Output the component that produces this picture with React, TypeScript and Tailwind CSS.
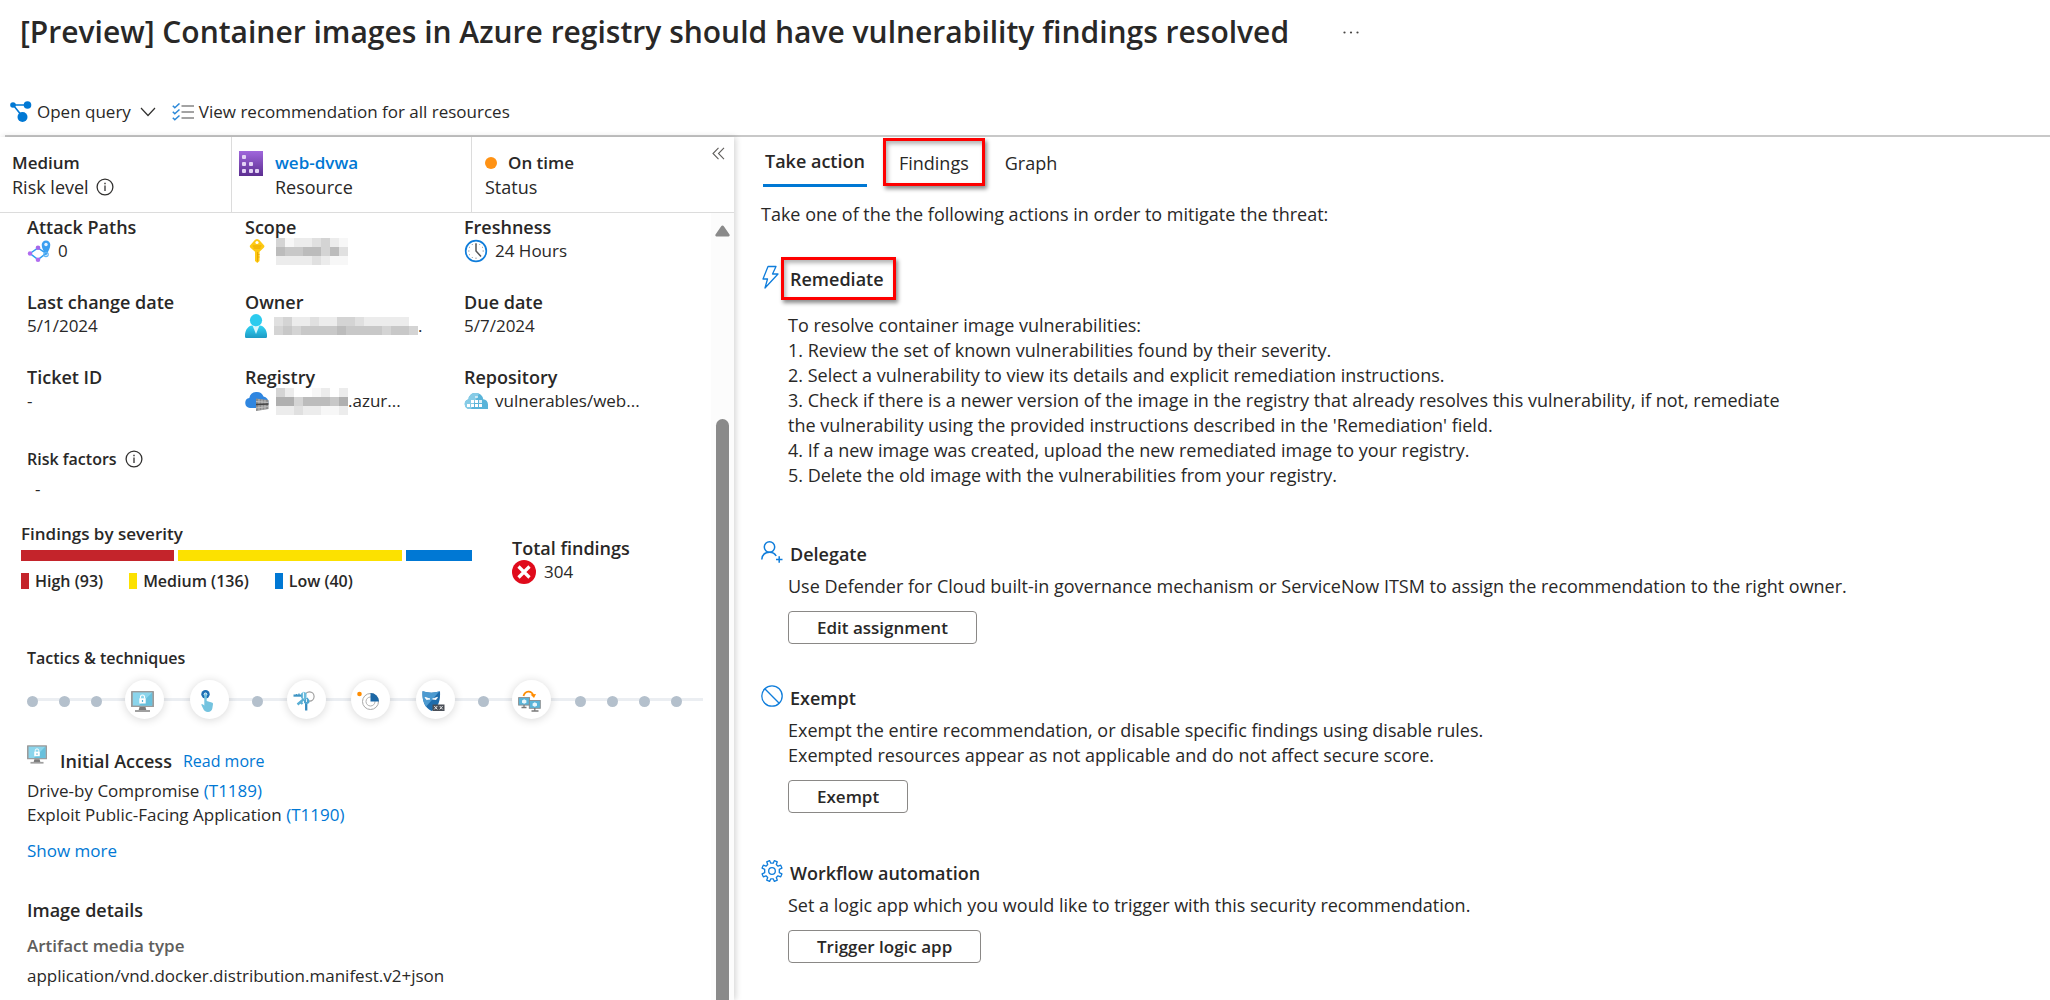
import type { ReactNode } from "react";

function QueryIcon() {
  return (
    <svg width="22" height="21" viewBox="0 0 22 21" fill="#0078d4">
      <path d="M3 4h15M4 5l8 10" stroke="#0078d4" strokeWidth="1.6" fill="none" />
      <circle cx="3" cy="4" r="2.8" />
      <circle cx="17.5" cy="4" r="3.8" />
      <circle cx="12.5" cy="16" r="5" />
    </svg>
  );
}

function ChevronIcon() {
  return (
    <svg width="16" height="10" viewBox="0 0 16 10" fill="none" stroke="#323130" strokeWidth="1.2">
      <path d="M1 1l7 7.5L15 1" />
    </svg>
  );
}

function ChecklistIcon() {
  return (
    <svg width="23" height="18" viewBox="0 0 23 18" fill="none">
      <path d="M9.500 3H22M9.500 9H22M9.500 15H22" stroke="#a3a3a3" strokeWidth="2" />
      <path d="M.8 2.800l2 2L7.500.5M.8 8.800l2 2 4.700-4.300M.8 14.800l2 2 4.700-4.300" stroke="#2b88d8" strokeWidth="1.500" />
    </svg>
  );
}

function InfoIcon() {
  return (
    <svg width="18" height="18" viewBox="0 0 18 18" fill="none" stroke="#323130">
      <circle cx="9" cy="9" r="7.900" strokeWidth="1.300" />
      <path d="M9 7.500v5.500" strokeWidth="1.300" />
      <path d="M9 4.800v1.400" strokeWidth="1.400" />
    </svg>
  );
}

function RegistryTile() {
  return (
    <svg width="24" height="25" viewBox="0 0 24 25">
      <defs>
        <linearGradient id="tile" x1="0" y1="0" x2="0" y2="1">
          <stop offset="0" stopColor="#a067dc" />
          <stop offset="1" stopColor="#5c2e91" />
        </linearGradient>
      </defs>
      <rect width="24" height="25" fill="url(#tile)" />
      <g fill="#e3d3f5">
        <rect x="3" y="4" width="4" height="4" rx="1" />
        <rect x="3" y="11" width="4" height="4" rx="1" />
        <rect x="10" y="11" width="4" height="4" rx="1" />
        <rect x="3" y="18" width="4" height="4" rx="1" />
        <rect x="10" y="18" width="4" height="4" rx="1" />
        <rect x="16" y="18" width="4" height="4" rx="1" />
      </g>
    </svg>
  );
}

function AttackPathIcon() {
  return (
    <svg width="24" height="24" viewBox="0 0 24 24" fill="none">
      <path d="M3 14.500L11 9l8 5.500-8 6z" stroke="#2f9df0" strokeWidth="1.500" />
      <circle cx="3" cy="14.500" r="2.200" fill="#b06cf0" />
      <circle cx="11" cy="8.800" r="2.300" fill="#a468ea" />
      <circle cx="11" cy="20.800" r="2.300" fill="#b06cf0" />
      <path d="M19 17c-2.500-5-4.300-8-4.300-11.200a4.300 4.300 0 1 1 8.600 0C23.300 9 21.500 12 19 17z" fill="#3a9ff0" />
      <circle cx="19" cy="5.500" r="1.700" fill="#e6f3ff" />
      <circle cx="19" cy="15.500" r="2.200" stroke="#5fb4f5" strokeWidth="1.200" />
    </svg>
  );
}

function KeyIcon() {
  return (
    <svg width="24" height="24" viewBox="0 0 24 24">
      <path d="M10 .8L12 0l2 .8 5 5.400c.6.700.6 1.500 0 2.200l-4.500 4.400V22l-2.200 2-2.300-2v-9.200L5.200 8.400c-.6-.7-.6-1.500 0-2.200z" fill="#fdc913" />
      <path d="M12.500 13v9.500M14.500 15.500h-1.300M14.500 18h-1.300" stroke="#e8a600" strokeWidth="1" />
      <path d="M7.800 7h8.500M8.500 9h7" stroke="#e8a600" strokeWidth="1" />
      <circle cx="12" cy="3.500" r="1.600" fill="#fff" />
    </svg>
  );
}

function ClockIcon() {
  return (
    <svg width="24" height="24" viewBox="0 0 24 24" fill="none">
      <circle cx="12" cy="12" r="10.300" stroke="#0f7ddb" strokeWidth="1.700" fill="#fff" />
      <path d="M12 4v1.500M12 18.500V20M4 12h1.500M18.500 12H20M8 5l.6 1M16 5l-.6 1M5 8l1 .6M19 8l-1 .6M5 16l1-.6M8 19l.6-1" stroke="#9aa0a6" strokeWidth="1" />
      <path d="M12 4.500V12l5 5.500" stroke="#555" strokeWidth="1.500" />
    </svg>
  );
}

function PersonIcon() {
  return (
    <svg width="22" height="24" viewBox="0 0 22 24">
      <defs>
        <linearGradient id="person" x1="0" y1="0" x2="0" y2="1">
          <stop offset="0" stopColor="#32d4f5" />
          <stop offset="1" stopColor="#1d9ac4" />
        </linearGradient>
      </defs>
      <path d="M0 21c0-5 3.500-9.500 7-9.500h8c3.500 0 7 4.500 7 9.500v1.500c0 1-.7 1.500-1.500 1.500h-19C.7 24 0 23.500 0 22.500z" fill="url(#person)" />
      <path d="M7.500 11.500h7L11 20z" fill="#d9f6fd" />
      <circle cx="11" cy="6.200" r="6.100" fill="#2ccbee" />
    </svg>
  );
}

function RegistryIcon() {
  return (
    <svg width="24" height="20" viewBox="0 0 24 20">
      <path d="M5 17a5 5 0 0 1-.7-9.900A7.500 7.500 0 0 1 18.500 5.500 5.800 5.800 0 0 1 17 17z" fill="#2f86e0" />
      <path d="M11 7.500l12.500 1.500v9L11 20z" fill="#8b8b8b" />
      <path d="M11 10.500l12.500 1M11 17l12.500-1.500M14 8v11.500M17 8.500V19M20 8.800v9.700" stroke="#c9c9c9" strokeWidth=".8" />
      <path d="M11 13.500l12.500-.5" stroke="#444" strokeWidth="1.400" />
    </svg>
  );
}

function RepositoryIcon() {
  return (
    <svg width="24" height="16" viewBox="0 0 24 16">
      <path d="M5 16a5 5 0 0 1-.5-9.800A6.500 6.500 0 0 1 12 0a7 7 0 0 1 7.200 6.300C22 6.500 24 8.500 24 11.500V16z" fill="#59b4d9" />
      <path d="M5 16a5 5 0 0 1-.5-9.800A6.500 6.500 0 0 1 12 0a7 7 0 0 1 3 .7L7 16z" fill="#86cbe6" />
      <g fill="#fff">
        <rect x="11" y="3" width="3" height="2" opacity=".6" />
        <rect x="7" y="7" width="3" height="3" />
        <rect x="11" y="7" width="3" height="3" />
        <rect x="15" y="7" width="3" height="3" opacity=".8" />
        <rect x="3" y="11" width="3" height="3" />
        <rect x="7" y="11" width="3" height="3" />
        <rect x="11" y="11" width="3" height="3" />
        <rect x="15" y="11" width="3" height="3" />
      </g>
    </svg>
  );
}

function ErrorIcon() {
  return (
    <svg width="24" height="24" viewBox="0 0 24 24">
      <circle cx="12" cy="12" r="12" fill="#e00b1c" />
      <path d="M6.500 6.500l11 11M17.500 6.500l-11 11" stroke="#fff" strokeWidth="3.200" />
    </svg>
  );
}

/* Mosaic that hides a private value. Each string is a row of blocks; the digit is the block's darkness. */
const shades = ["#ffffff", "#f7f7f7", "#ececec", "#e0e0e0", "#d4d4d4", "#c8c8c8", "#bcbcbc", "#b0b0b0"];

function Redacted({ rows, label }: { rows: string[]; label: string }) {
  const columns = rows[0].length;
  return (
    <svg width={columns * 9} height={rows.length * 9} role="img" aria-label={label} className="shrink-0">
      {rows.flatMap((row, y) =>
        row.split("").map((shade, x) => (
          <rect key={`${x}-${y}`} x={x * 9} y={y * 9} width="9" height="9" fill={shades[Number(shade)]} />
        )),
      )}
    </svg>
  );
}

function MonitorLock({ width, height }: { width: number; height: number }) {
  return (
    <svg width={width} height={height} viewBox="0 0 23 21">
      <rect width="23" height="16" rx=".6" fill="#9b9b9b" />
      <rect x="1.800" y="1.400" width="19.400" height="13.200" fill="#8bd5ec" />
      <path d="M21.200 1.400v13.200H8z" fill="#68c0dc" />
      <path d="M8.500 16h6l.8 3h-7.600z" fill="#7a7a7a" />
      <rect x="4" y="19" width="15" height="2" fill="#a0a0a0" />
      <rect x="8.300" y="7.300" width="6.400" height="5.200" fill="#fff" />
      <path d="M9.500 7.500V6a2 2 0 0 1 4 0v1.500" stroke="#fff" strokeWidth="1.100" fill="none" />
      <path d="M11.500 9v2" stroke="#59b4d9" strokeWidth="1.200" />
    </svg>
  );
}

function PressHand() {
  return (
    <svg width="13" height="22" viewBox="0 0 13 22">
      <circle cx="4.500" cy="4.300" r="4.200" fill="#1c6eb4" />
      <circle cx="4.500" cy="4.300" r="1.700" fill="#fff" />
      <path d="M3.300 4.500a1.200 1.200 0 0 1 2.400 0V11l5 1.500c.9.300 1.400.8 1.300 1.700l-.7 4.300c-.5 2.200-2 3.500-4.300 3.500-2.500 0-4-1.300-4.900-3.500L.2 14.500c1.300-.6 2.300 0 3.100 1.200z" fill="#74c3df" />
    </svg>
  );
}

function KeysIcon() {
  return (
    <svg width="22" height="20" viewBox="0 0 22 20" fill="none">
      <circle cx="16.500" cy="5.500" r="4.600" stroke="#9a9a9a" strokeWidth="1.100" />
      <path d="M8 2.500L10.500.8l3 1.200v5.500l-3 1.400L8 7z" fill="#6cbcdd" />
      <path d="M.5 4.600h8" stroke="#3f95c4" strokeWidth="2.200" />
      <path d="M3.500 3v1.500M6 2.500V4" stroke="#3f95c4" strokeWidth="1.300" />
      <path d="M10.500 1.500v6.500" stroke="#fff" strokeWidth=".9" />
      <path d="M11 8l-6.500 5.500M7.500 11l2 2" stroke="#59aed4" strokeWidth="2.400" />
      <path d="M13.200 10v9.500" stroke="#3388bd" strokeWidth="2.300" />
      <path d="M11 9l3.500-2.500 1.800 2.500v3l-2.800 1.200L11 12z" fill="#4ea5d0" />
      <path d="M13.500 8v3" stroke="#fff" strokeWidth=".8" />
    </svg>
  );
}

function RadarIcon() {
  return (
    <svg width="23" height="22" viewBox="0 0 23 22" fill="none">
      <circle cx="2.500" cy="4" r="2.300" fill="#ff8c00" />
      <circle cx="13.500" cy="11.500" r="8" stroke="#a8a8a8" strokeWidth="1" />
      <circle cx="13.500" cy="11.500" r="4.500" stroke="#b0b0b0" strokeWidth="1" />
      <path d="M13.500 11.500V3a8.500 8.500 0 0 1 8.500 8.500z" fill="#1c68a6" />
    </svg>
  );
}

function MaskIcon() {
  return (
    <svg width="23" height="21" viewBox="0 0 23 21">
      <path d="M.5.300c6 1.800 11.500 1.800 17.500 0 .6 9-1.500 16.500-8.500 19.700C2.500 16.800 0 9.300.5.300z" fill="#1f6cab" />
      <path d="M.5.300c5.800 1.700 11.200 1.800 16.800.2L4 15.700C1 11.800.1 6.500.5.300z" fill="#4c9ad0" />
      <path d="M3 6.300l5 1.700-3.500.6zM15.500 6.300l-5 1.700 3.500.6z" fill="#fff" stroke="#fff" strokeWidth=".8" />
      <rect x="10.500" y="13.500" width="12" height="6.500" fill="#4a4f57" />
      <path d="M12.300 15l3 3.400M15.300 15l-3 3.400M17.700 15l3 3.400M20.700 15l-3 3.400" stroke="#e6e6e6" strokeWidth="1" />
    </svg>
  );
}

function MoveIcon() {
  return (
    <svg width="23" height="22" viewBox="0 0 23 22" fill="none">
      <path d="M5.500 6c1.500-5.500 8-6 9.800-.5" stroke="#ff8c00" strokeWidth="1.800" />
      <path d="M12.500 4.500l5.500-.5-2 4z" fill="#ff8c00" />
      <rect x=".6" y="7.600" width="11" height="7.500" fill="#59b4d9" stroke="#8a8a8a" strokeWidth=".9" />
      <path d="M3.500 17.500h5M6 15v2.500" stroke="#7a7a7a" strokeWidth="1.300" />
      <rect x="11.300" y="10.500" width="11" height="7.800" fill="#59b4d9" stroke="#8a8a8a" strokeWidth=".9" />
      <path d="M13.500 21h7M16.800 18v3" stroke="#7a7a7a" strokeWidth="1.300" />
      <path d="M4 10.500l2.200-1.200 2.200 1.200v2.300l-2.200 1-2.200-1zM14.600 13.500l2.200-1.200 2.200 1.200v2.300l-2.200 1-2.200-1z" fill="#e8f6fb" />
    </svg>
  );
}

function BoltIcon() {
  return (
    <svg width="22" height="24" viewBox="0 0 22 24" fill="none" stroke="#0f7ddb" strokeWidth="1.300" strokeLinejoin="round">
      <path d="M7 1.500h8l-3.500 7.500H17L4 23l2.500-9H2z" />
    </svg>
  );
}

function PersonAddIcon() {
  return (
    <svg width="22" height="24" viewBox="0 0 22 24" fill="none" stroke="#0f7ddb" strokeWidth="1.500">
      <circle cx="8.500" cy="7" r="5.200" />
      <path d="M.8 19.500c.4-4.800 3.600-7.300 7.700-7.300 3 0 5.300 1.300 6.700 3.800M15 19.500h6.500M18.200 16.200v6.500" />
    </svg>
  );
}

function BlockIcon() {
  return (
    <svg width="22" height="24" viewBox="0 0 22 24" fill="none" stroke="#0f7ddb" strokeWidth="1.300">
      <circle cx="11" cy="12" r="10.200" />
      <path d="M3.800 4.800l14.400 14.400" />
    </svg>
  );
}

function GearIcon() {
  return (
    <svg width="22" height="24" viewBox="0 0 22 24" fill="none" stroke="#0f7ddb" strokeWidth="1.300" strokeLinejoin="round">
      <path d="M9.800 4.200L8.600 1.600 5.700 2.800l1 2.700-1.700 1.700-2.700-1L1.100 9.100l2.600 1.200v3.400l-2.600 1.200 1.200 2.900 2.700-1 1.700 1.700-1 2.700 2.900 1.200 1.200-2.600h2.400l1.200 2.600 2.900-1.200-1-2.700 1.700-1.700 2.700 1 1.200-2.900-2.600-1.200v-3.400l2.600-1.200-1.200-2.900-2.700 1-1.700-1.700 1-2.700-2.900-1.200-1.200 2.600z" />
      <circle cx="11" cy="12" r="3.300" />
    </svg>
  );
}

function Fact({ label, icon, children }: { label: string; icon?: ReactNode; children: ReactNode }) {
  return (
    <div className="h-[75px]">
      <dt className="text-[18px] font-semibold">{label}</dt>
      <dd className="flex h-6 items-center whitespace-nowrap">
        {icon && <span className="mr-[7px] shrink-0">{icon}</span>}
        {children}
      </dd>
    </div>
  );
}

const severities = [
  { name: "High", count: 93, width: 153, color: "bg-[#c4242b]" },
  { name: "Medium", count: 136, width: 224, color: "bg-[#fce100]" },
  { name: "Low", count: 40, width: 66, color: "bg-[#0078d4]" },
];

const tactics: (ReactNode | null)[] = [
  null,
  null,
  null,
  <MonitorLock width={23} height={21} />,
  <PressHand />,
  null,
  <KeysIcon />,
  <RadarIcon />,
  <MaskIcon />,
  null,
  <MoveIcon />,
  null,
  null,
  null,
  null,
];

function Timeline() {
  return (
    <div className="relative flex h-10 w-[677px] items-center">
      <div className="absolute top-[19px] right-[-10px] left-4 h-[3px] bg-[#ebeef2]" />
      {tactics.map((icon, i) =>
        icon ? (
          <div key={i} className="relative flex flex-[2] justify-center">
            <div className="flex size-[39px] items-center justify-center rounded-full bg-white pt-1 pr-1 shadow-[0_1px_10px_rgba(0,0,0,0.16)]">
              {icon}
            </div>
          </div>
        ) : (
          <div key={i} className="relative flex flex-1 justify-center pt-1">
            <div className="size-[11px] rounded-full bg-[#b4c0cc]" />
          </div>
        ),
      )}
    </div>
  );
}

function SidePanel() {
  return (
    <aside className="relative z-10 flex w-[35.800%] min-w-[734px] shrink-0 flex-col bg-white shadow-[2px_0_6px_rgba(0,0,0,0.16)]">
      <div className="flex h-[76px] shrink-0 border-b border-[#dcdcdc]">
        <div className="w-[232px] border-r border-[#dcdcdc] pt-[14px] pl-3 leading-6">
          <div className="font-semibold">Medium</div>
          <div className="flex items-center gap-[7px] text-[18px]">
            Risk level <InfoIcon />
          </div>
        </div>
        <div className="flex w-[240px] gap-3 border-r border-[#dcdcdc] pt-[14px] pl-[7px] leading-6">
          <RegistryTile />
          <div>
            <a href="#resource" className="font-semibold text-[#0078d4]">web-dvwa</a>
            <div className="text-[18px]">Resource</div>
          </div>
        </div>
        <div className="flex flex-1 justify-between pl-[13px] leading-6">
          <div className="pt-[14px]">
            <div className="flex items-center gap-[11px] font-semibold">
              <span className="size-3 rounded-full bg-[#ff9214]" />
              On time
            </div>
            <div className="text-[18px]">Status</div>
          </div>
          <button type="button" aria-label="Collapse panel" className="mt-2 mr-2 flex size-4 items-center justify-center">
            <svg width="13" height="13" viewBox="0 0 13 13" fill="none" stroke="#605e5c" strokeWidth="1.100">
              <path d="M6.500.8L1 6.500l5.500 5.700M12 .8L6.500 6.500l5.500 5.700" />
            </svg>
          </button>
        </div>
      </div>

      <div className="flex min-h-0 flex-1">
        <div className="min-w-0 flex-1 overflow-hidden leading-6">
          <dl className="grid grid-cols-[218px_219px_1fr] pt-0.5 pl-[27px]">
            <Fact label="Attack Paths" icon={<AttackPathIcon />}>0</Fact>
            <Fact label="Scope" icon={<KeyIcon />}>
              <Redacted label="Hidden scope" rows={["41223421", "65566463", "22223211"]} />
            </Fact>
            <Fact label="Freshness" icon={<ClockIcon />}>24 Hours</Fact>
            <Fact label="Last change date">5/1/2024</Fact>
            <Fact label="Owner" icon={<PersonIcon />}>
              <Redacted label="Hidden owner" rows={["3422322443222220", "4545555655554554"]} />.
            </Fact>
            <Fact label="Due date">5/7/2024</Fact>
            <Fact label="Ticket ID">-</Fact>
            <Fact label="Registry" icon={<RegistryIcon />}>
              <Redacted label="Hidden registry" rows={["42001202", "77466657", "22322112"]} />.azur...
            </Fact>
            <Fact label="Repository" icon={<RepositoryIcon />}>vulnerables/web...</Fact>
          </dl>

          <section className="mt-[7px] pl-[27px]">
            <h2 className="flex items-center gap-2 text-[16px] font-semibold">
              Risk factors <InfoIcon />
            </h2>
            <p className="mt-1.5 pl-2">-</p>
          </section>

          <section className="mt-[21px] flex gap-10 pl-[21px]">
            <div className="w-[451px]">
              <h2 className="font-semibold">Findings by severity</h2>
              <div className="mt-1 flex gap-1">
                {severities.map((s) => (
                  <div key={s.name} className={`h-[11px] ${s.color}`} style={{ width: s.width }} />
                ))}
              </div>
              <ul className="mt-2 flex gap-[26px] text-[16px] font-semibold">
                {severities.map((s) => (
                  <li key={s.name} className="flex items-center gap-1.5">
                    <span className={`h-4 w-2 ${s.color}`} />
                    {s.name} ({s.count})
                  </li>
                ))}
              </ul>
            </div>
            <div className="pt-3.5">
              <h2 className="text-[18px] font-semibold">Total findings</h2>
              <div className="flex items-center gap-2">
                <ErrorIcon /> 304
              </div>
            </div>
          </section>

          <section className="mt-[53px]">
            <h2 className="pl-[27px] text-[16px] font-semibold">Tactics &amp; techniques</h2>
            <div className="mt-[9px] pl-4">
              <Timeline />
            </div>
          </section>

          <section className="mt-[26px] pl-[27px]">
            <div className="flex gap-[13px]">
              <MonitorLock width={20} height={19} />
              <h3 className="pt-1 text-[18px] font-semibold">Initial Access</h3>
              <a href="#initial-access" className="-ml-0.5 pt-1 text-[16px] text-[#0078d4]">Read more</a>
            </div>
            <div className="mt-1.5">
              Drive-by Compromise <a href="#t1189" className="text-[#0078d4]">(T1189)</a>
            </div>
            <div>
              Exploit Public-Facing Application <a href="#t1190" className="text-[#0078d4]">(T1190)</a>
            </div>
            <a href="#tactics" className="mt-3 block text-[#0078d4]">Show more</a>
          </section>

          <section className="mt-[35px] pl-[27px]">
            <h2 className="text-[18px] font-semibold">Image details</h2>
            <h3 className="mt-3 font-semibold text-[#605e5c]">Artifact media type</h3>
            <p className="mt-1.5">application/vnd.docker.distribution.manifest.v2+json</p>
          </section>
        </div>

        <div className="flex w-[23px] shrink-0 flex-col items-center overflow-hidden bg-[#fcfcfc] pt-3" aria-hidden="true">
          <svg width="15" height="12" viewBox="0 0 15 12">
            <path d="M6.200 1.200a1.500 1.500 0 0 1 2.600 0L14.500 9.500c.5.900 0 2-1 2h-12c-1 0-1.500-1.100-1-2z" fill="#8a8a8a" />
          </svg>
          <div className="mt-[182px] w-[13px] flex-1 rounded-t-full bg-[#8a8a8a]" />
        </div>
      </div>
    </aside>
  );
}

const redBox =
  "border-[3px] border-[#fe0000] shadow-[2px_3px_4px_rgba(0,0,0,0.45),inset_2px_3px_4px_rgba(0,0,0,0.3)]";

function ActionSection({
  icon,
  title,
  children,
  action,
  spacing,
}: {
  icon: ReactNode;
  title: string;
  children: ReactNode;
  action: string;
  spacing: string;
}) {
  return (
    <section className={spacing}>
      <div className="flex gap-[7px]">
        {icon}
        <h2 className="pt-0.5 font-semibold">{title}</h2>
      </div>
      <div className="mt-[7px] pl-[27px]">
        {children}
        <button type="button" className="mt-3 h-[33px] rounded-sm border border-[#8a8886] px-7 text-[17px] font-semibold">
          {action}
        </button>
      </div>
    </section>
  );
}

function ActionsPanel() {
  return (
    <main className="min-w-0 flex-1 pl-[27px] text-[18px] leading-[25px]">
      <div role="tablist" className="flex h-[50px] items-start pl-0.5">
        <button type="button" role="tab" aria-selected="true" className="h-[50px] border-b-[3px] border-[#0078d4] px-0.5 pt-0.5 font-semibold">
          Take action
        </button>
        <button type="button" role="tab" aria-selected="false" className={`mt-px ml-4 h-12 px-[13px] pt-0.5 ${redBox}`}>
          Findings
        </button>
        <button type="button" role="tab" aria-selected="false" className="ml-5 h-[50px] pt-0.5">
          Graph
        </button>
      </div>
      <p className="mt-[15px]">Take one of the the following actions in order to mitigate the threat:</p>

      <section className="mt-[30px]">
        <div className="flex items-center">
          <div className="-mt-1">
            <BoltIcon />
          </div>
          <h2 className={`-ml-0.5 h-[43px] pr-[9px] pl-1.5 leading-[38px] font-semibold ${redBox}`}>Remediate</h2>
        </div>
        <div className="mt-[13px] max-w-[1051px] pr-6 pl-[27px]">
          <p>To resolve container image vulnerabilities:</p>
          <p>1. Review the set of known vulnerabilities found by their severity.</p>
          <p>2. Select a vulnerability to view its details and explicit remediation instructions.</p>
          <p>
            3. Check if there is a newer version of the image in the registry that already resolves this
            vulnerability, if not, remediate the vulnerability using the provided instructions described in the
            'Remediation' field.
          </p>
          <p>4. If a new image was created, upload the new remediated image to your registry.</p>
          <p>5. Delete the old image with the vulnerabilities from your registry.</p>
        </div>
      </section>

      <ActionSection icon={<PersonAddIcon />} title="Delegate" action="Edit assignment" spacing="mt-[52px]">
        <p>
          Use Defender for Cloud built-in governance mechanism or ServiceNow ITSM to assign the recommendation to the
          right owner.
        </p>
      </ActionSection>
      <ActionSection icon={<BlockIcon />} title="Exempt" action="Exempt" spacing="mt-10">
        <p>Exempt the entire recommendation, or disable specific findings using disable rules.</p>
        <p>Exempted resources appear as not applicable and do not affect secure score.</p>
      </ActionSection>
      <ActionSection icon={<GearIcon />} title="Workflow automation" action="Trigger logic app" spacing="mt-[46px]">
        <p>Set a logic app which you would like to trigger with this security recommendation.</p>
      </ActionSection>
    </main>
  );
}

export default function App() {
  return (
    <div className="flex h-screen flex-col overflow-hidden bg-white font-['Open_Sans','Noto_Sans',sans-serif] text-[17px] text-[#292827]">
      <header className="flex h-16 shrink-0 items-center gap-[54px] pl-5">
        <h1 className="text-[30px] leading-[40px] font-semibold">
          [Preview] Container images in Azure registry should have vulnerability findings resolved
        </h1>
        <button type="button" aria-label="More options">
          <svg width="16" height="3" viewBox="0 0 16 3" fill="#484644">
            <circle cx="1.500" cy="1.500" r="1.100" />
            <circle cx="8" cy="1.500" r="1.100" />
            <circle cx="14.500" cy="1.500" r="1.100" />
          </svg>
        </button>
      </header>
      <nav className="ml-[5px] flex h-[73px] shrink-0 items-center border-b-2 border-[#c8c8c8] pt-6 pl-[5px]">
        <button type="button" className="flex items-center">
          <QueryIcon />
          <span className="mr-[9px] ml-[5px]">Open query</span>
          <ChevronIcon />
        </button>
        <button type="button" className="ml-4 flex items-center gap-1">
          <ChecklistIcon />
          View recommendation for all resources
        </button>
      </nav>
      <div className="flex min-h-0 flex-1">
        <SidePanel />
        <ActionsPanel />
      </div>
    </div>
  );
}
